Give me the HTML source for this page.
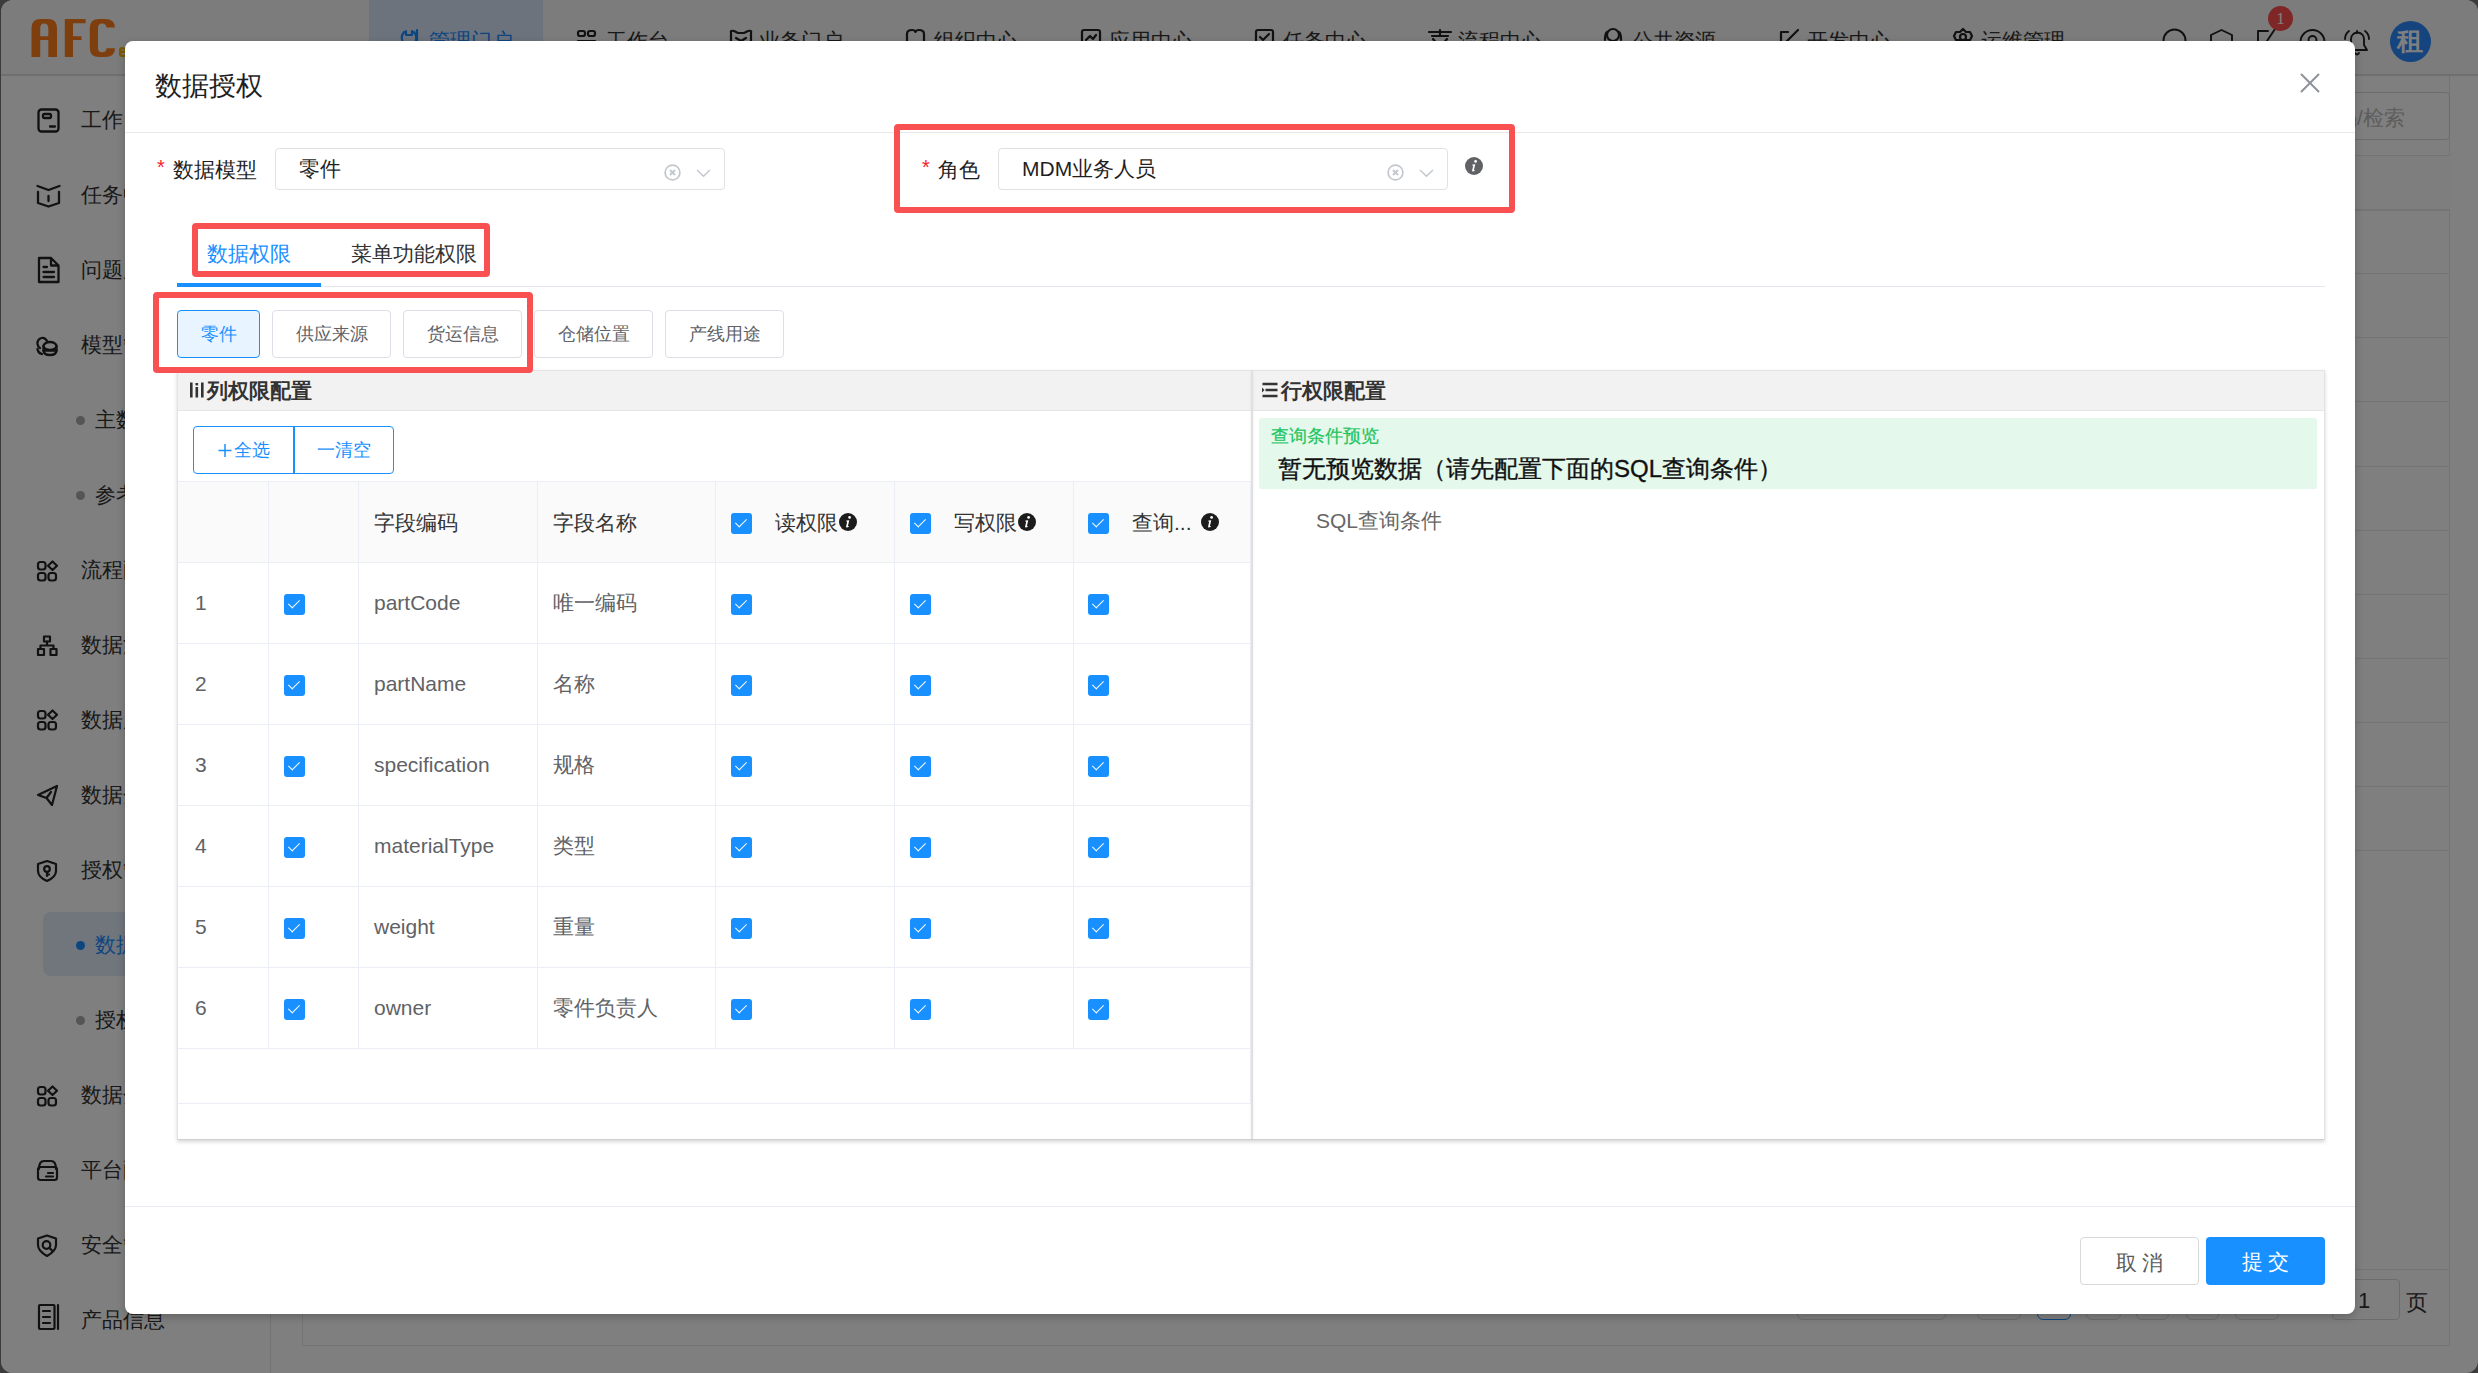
<!DOCTYPE html>
<html><head><meta charset="utf-8">
<style>
*{box-sizing:border-box;margin:0;padding:0}
html,body{width:2478px;height:1373px;overflow:hidden}
body{background:#767676;font-family:"Liberation Sans",sans-serif;position:relative}
.page{position:absolute;left:1px;top:0;width:2477px;height:1373px;border-radius:12px;background:#fff;overflow:hidden}
.hdr{position:absolute;left:0;top:0;width:100%;height:76px;background:#f6f8f6;border-bottom:2px solid #dedede}
.nav{position:absolute;top:28px;font-size:21px;line-height:26px;color:#333;white-space:nowrap}
.nav svg{position:absolute;top:2px}
.side{position:absolute;left:0;top:76px;width:270px;height:1300px;background:#fff;border-right:1px solid #e6e6e6}
.si{position:absolute;left:80px;font-size:21px;color:#333;white-space:nowrap;line-height:26px}

.sub{position:absolute;left:94px;font-size:21px;color:#333;white-space:nowrap;line-height:26px}
.sub:before{content:"";position:absolute;left:-19px;top:8.5px;width:9px;height:9px;border-radius:50%;background:#aaa}
.mask{position:absolute;left:0;top:0;width:2478px;height:1373px;background:rgba(0,0,0,.5)}
.modal{position:absolute;left:125px;top:41px;width:2230px;height:1273px;background:#fff;border-radius:8px;overflow:hidden;box-shadow:0 3px 10px rgba(0,0,0,.22)}
.t{position:absolute;white-space:nowrap}
.red{position:absolute;border:6px solid #f95052;border-radius:4px}
.inp{position:absolute;top:148px;height:42px;border:1px solid #dfe1e5;border-radius:4px;background:#fff}
.inp span{position:absolute;top:5px;font-size:21px;line-height:30px;color:#1f1f1f;white-space:nowrap}
.clr{position:absolute;top:164px;width:16px;height:16px;border:1.3px solid #bbb;border-radius:50%}
.clr:before,.clr:after{content:"";position:absolute;left:3.5px;top:6.5px;width:7px;height:1.3px;background:#bbb;transform:rotate(45deg)}
.clr:after{transform:rotate(-45deg)}
.chev{position:absolute;top:168.5px}
.info{position:absolute;border-radius:50%;color:#fff;text-align:center;font-style:italic;font-weight:bold;font-family:"Liberation Serif",serif}
.sbtn{position:absolute;top:310px;height:48px;border:1px solid #dcdfe6;border-radius:4px;font-size:18px;line-height:46px;text-align:center;color:#606266;background:#fff}
.sbtn.act{background:#e8f4ff;border-color:#1890ff;color:#1890ff}
.panel{position:absolute;border:1px solid #e3e3e3;border-bottom-color:#d0d0d0;box-shadow:0 2px 4px rgba(0,0,0,.16);background:#fff}
.fbtn{position:absolute;top:1237px;width:119px;height:48px;border-radius:4px;font-size:21px;line-height:50px;text-align:center}
.cb{position:absolute;width:21px;height:21px;border-radius:3px;background:#1890ff}
.cb:after{content:"";position:absolute;left:7px;top:3px;width:5px;height:10px;border:solid #fff;border-width:0 1.6px 1.6px 0;transform:rotate(45deg)}
.td{position:absolute;font-size:21px;line-height:30px;color:#606266;white-space:nowrap}
.sub.act:before{background:#1a8cff}
</style></head>
<body>
<div class="page">
  <div class="hdr">
    <svg style="position:absolute;left:0;top:0" width="140" height="70" viewBox="0 0 140 70">
      <path fill="#ff7c1c" fill-rule="evenodd" d="M30.5 57 V28 Q30.5 19 39.5 19 H47 Q56 19 56 28 V57 H47.3 V40 H39.2 V57 Z M39.2 36.2 V28.5 Q39.2 23.5 43.2 23.5 Q47.3 23.5 47.3 28.5 V36.2 Z"/>
      <path fill="#ff7c1c" d="M63.8 57 V19 H84.6 V23.3 H72 V36.2 H80.5 V40 H72 V57 Z"/>
      <path fill="#ff7c1c" d="M114 27.5 V28 Q114 19 104 19 H98 Q88.8 19 88.8 28 V48 Q88.8 57 98 57 H104 Q114 57 114 48 V48.3 H105.5 V48 Q105.5 52.3 101 52.3 Q97 52.3 97 48 V28 Q97 23.4 101 23.4 Q105.5 23.4 105.5 28 V27.5 Z"/>
      <path fill="#ffb000" fill-rule="evenodd" d="M118 50 Q118 47 121 47 Q125 47 125 50 V53 H120.5 V54.5 H125 V57 H121 Q118 57 118 54 Z M120.5 50.8 H122.6 V49.5 H120.5 Z"/>
    </svg>
    <div style="position:absolute;left:368px;top:0;width:174px;height:75px;background:#d8e6fb"></div>
    <svg style="position:absolute;left:395px;top:20px" width="1600" height="40" viewBox="395 20 1600 40" fill="none" stroke="#222" stroke-width="2.2" stroke-linecap="round" stroke-linejoin="round">
      <path stroke="#1a8cff" d="M405 31 V35 H411 V31 M403 32 Q398 38 404 46 M413 32 Q418 38 412 46 M416 30 V50 M412 50 H420"/>
      <rect x="577" y="31" width="7" height="5" rx="2"/><rect x="587" y="31" width="7" height="5" rx="2"/><path d="M577 41 H594"/>
      <path d="M730 33 Q729 30 733 31 L737 33 H743 L747 31 Q751 30 750 33 V42 M730 33 V42 M735 38 L740 41 L745 38"/>
      <path d="M906 34 Q906 30 911 30 Q914 30 914.5 32 Q915 30 918 30 Q923 30 923 34 V44"/><path d="M906 34 V44"/>
      <rect x="1081" y="30" width="18" height="16" rx="2"/><path d="M1085 40 L1089 36 L1092 39 L1095 35"/>
      <rect x="1255" y="30" width="17" height="18" rx="2"/><path d="M1259 37 L1262 40 L1268 34"/>
      <path d="M1428 32 H1450 M1439 30 V36 M1431 36 L1447 36 M1432 39 L1437 45 M1446 39 L1441 45"/>
      <circle cx="1612" cy="35" r="6"/><path d="M1604 40 Q1604 33 1606 32 M1620 40 Q1620 33 1618 32"/>
      <path d="M1780 32 H1787 M1780 32 V48 M1783 44 L1797 30"/>
      <path d="M1962 29 L1965 32 H1969 L1971 36 L1969 40 H1955 L1953 36 L1955 32 H1959 Z"/><circle cx="1962" cy="37" r="3"/>
    </svg>
    <div class="nav" style="left:428px;color:#1a8cff">管理门户</div>
    <div class="nav" style="left:605px">工作台</div>
    <div class="nav" style="left:758px">业务门户</div>
    <div class="nav" style="left:933px">组织中心</div>
    <div class="nav" style="left:1108px">应用中心</div>
    <div class="nav" style="left:1282px">任务中心</div>
    <div class="nav" style="left:1457px">流程中心</div>
    <div class="nav" style="left:1631px">公共资源</div>
    <div class="nav" style="left:1806px">开发中心</div>
    <div class="nav" style="left:1980px">运维管理</div>
    <svg style="position:absolute;left:2148.5px;top:20px" width="230" height="45" viewBox="2150 20 230 45" fill="none" stroke="#222" stroke-width="1.9" stroke-linecap="round" stroke-linejoin="round">
      <circle cx="2174.5" cy="40.5" r="11"/>
      <path d="M2221.5 30 L2232 35 V47 L2221.5 52 L2211 47 V35 Z"/>
      <path d="M2268 31 H2258 V52 H2276 V42 M2265 44 L2277 26"/>
      <circle cx="2312.5" cy="42" r="12"/><circle cx="2312.5" cy="40" r="4"/>
      <path d="M2347 50 H2367 L2364 45 V39 A6.5 6.5 0 0 0 2351 39 V45 Z M2357 31 V33 M2355 53 Q2357 56 2359 53 M2345 39 Q2345 34 2349 31 M2369 39 Q2369 34 2365 31"/>
    </svg>
    <div style="position:absolute;left:2267px;top:5.5px;width:25px;height:25px;border-radius:50%;background:#ff4d4f;color:#fff;font-size:17px;line-height:25px;text-align:center;font-family:'Liberation Serif',serif">1</div>
    <div style="position:absolute;left:2388.5px;top:20.5px;width:41px;height:41px;border-radius:50%;background:#2a89ff;color:#fff;font-size:26px;font-weight:bold;line-height:41px;text-align:center">租</div>
  </div>
  <div class="side">
<svg style="position:absolute;left:0;top:0" width="80" height="1300" viewBox="0 76 80 1300" fill="none" stroke="#222" stroke-width="2.3" stroke-linecap="round" stroke-linejoin="round">
  <rect x="37.5" y="109.5" width="20" height="22" rx="3"/><rect x="42" y="114" width="8" height="4" rx="1.5"/><path d="M49 126.5 H54"/>
  <path d="M36.5 186 L47.5 190 L58.5 186 M37 192 V203 L47.5 206.5 L58 203 V192 M47.5 196 V201"/>
  <path d="M38 258 H50 L57.5 265.5 V282 H38 Z M50 258 V265.5 H57.5 M42.5 267 H46 M42.5 272 H53 M42.5 277 H53"/>
  <path d="M46 341 Q44 337 40.5 338 Q36 339.5 36.5 344 Q37 347 39 348 M36.5 349 Q37 353 41 354"/><ellipse cx="49" cy="346" rx="6.5" ry="4"/><path d="M42.5 346 V351 Q43 355 49 355 Q55 355 55.5 351 V346"/><path d="M42.5 350.5 H55.5"/>
</svg><svg style="position:absolute;left:0;top:0" width="80" height="1300" viewBox="0 76 80 1300" fill="none" stroke="#222" stroke-width="2.2" stroke-linecap="round" stroke-linejoin="round"><rect x="37" y="562" width="7.5" height="7.5" rx="2.5"/><path d="M51.5 561.5 L56 565.75 L51.5 570 L47 565.75 Z"/><rect x="37" y="573" width="7.5" height="7.5" rx="2.5"/><rect x="47.5" y="573" width="7.5" height="7.5" rx="2.5"/><rect x="37" y="711" width="7.5" height="7.5" rx="2.5"/><path d="M51.5 710.5 L56 714.75 L51.5 719 L47 714.75 Z"/><rect x="37" y="722" width="7.5" height="7.5" rx="2.5"/><rect x="47.5" y="722" width="7.5" height="7.5" rx="2.5"/><rect x="37" y="1087" width="7.5" height="7.5" rx="2.5"/><path d="M51.5 1086.5 L56 1090.75 L51.5 1095 L47 1090.75 Z"/><rect x="37" y="1098" width="7.5" height="7.5" rx="2.5"/><rect x="47.5" y="1098" width="7.5" height="7.5" rx="2.5"/><rect x="43" y="636.5" width="6" height="5"/><path d="M46 641.5 V645.5 M39.5 649 V645.5 H52.5 V649"/><rect x="37" y="649" width="6" height="6"/><rect x="49.5" y="649" width="6" height="6"/><path d="M37 795 L56 786 L51 805 L45.5 798 Z M45.5 798 L50 792"/><path d="M46 861 L55 864 V871 Q55 877 46 881 Q37 877 37 871 V864 Z"/><circle cx="46" cy="869" r="2.8"/><path d="M46 872 V876 M46 874.5 H48"/><path d="M38 1169 Q38 1161 43 1161 H50 Q55 1161 55 1169"/><rect x="37" y="1167" width="19" height="13" rx="2.5"/><path d="M47 1173 H52 M45 1176.5 H52"/><path d="M46 1235.5 L55 1238.5 V1245 Q55 1251 46 1256 Q37 1251 37 1245 V1238.5 Z"/><circle cx="45.5" cy="1245" r="3.8"/><path d="M48.5 1248 L51.5 1251"/><rect x="38" y="1305" width="15.5" height="24" rx="1"/><path d="M42 1311 H49 M42 1317 H49 M42 1323 H49 M57 1305 V1329"/></svg>
    <div class="si" style="top:31px">工作台</div>
    <div class="si" style="top:106px">任务中心</div>
    <div class="si" style="top:181px">问题反馈</div>
    <div class="si" style="top:256px">模型管理</div>
    <div class="sub" style="top:331px">主数据</div>
    <div class="sub" style="top:406px">参考数据</div>
    <div class="si" style="top:481px">流程配置</div>
    <div class="si" style="top:556px">数据治理</div>
    <div class="si" style="top:631px">数据质量</div>
    <div class="si" style="top:706px">数据分发</div>
    <div class="si" style="top:781px">授权管理</div>
    <div style="position:absolute;left:42px;top:836px;width:220px;height:64px;border-radius:8px;background:#e3edfb"></div>
    <div class="sub act" style="top:856px;color:#1a8cff">数据授权</div>
    <div class="sub" style="top:931px">授权记录</div>
    <div class="si" style="top:1006px">数据分析</div>
    <div class="si" style="top:1081px">平台配置</div>
    <div class="si" style="top:1156px">安全管理</div>
    <div class="si" style="top:1231px">产品信息</div>
  </div>
  <!-- content -->
  <div style="position:absolute;left:301px;top:76px;width:2148px;height:1270px;border:1px solid #e8e8e8;border-top:none;background:#fff"></div>
  <div style="position:absolute;left:1900px;top:92px;width:549px;height:48px;border:1px solid #d9d9d9;border-radius:4px;background:#fff"></div>
  <div class="t" style="left:2314px;top:104px;font-size:21px;color:#bbb">编码/检索</div>
  <div style="position:absolute;left:302px;top:155px;width:2147px;height:55px;background:#fcfcfc;border-top:1px solid #e8e8e8;border-bottom:1px solid #e8e8e8"></div>
  <div id="bgrows"><div style="position:absolute;left:302px;top:210px;width:2147px;height:1px;background:#e8e8e8"></div><div style="position:absolute;left:302px;top:273px;width:2147px;height:1px;background:#e8e8e8"></div><div style="position:absolute;left:302px;top:337px;width:2147px;height:1px;background:#e8e8e8"></div><div style="position:absolute;left:302px;top:401px;width:2147px;height:1px;background:#e8e8e8"></div><div style="position:absolute;left:302px;top:466px;width:2147px;height:1px;background:#e8e8e8"></div><div style="position:absolute;left:302px;top:530px;width:2147px;height:1px;background:#e8e8e8"></div><div style="position:absolute;left:302px;top:594px;width:2147px;height:1px;background:#e8e8e8"></div><div style="position:absolute;left:302px;top:658px;width:2147px;height:1px;background:#e8e8e8"></div><div style="position:absolute;left:302px;top:722px;width:2147px;height:1px;background:#e8e8e8"></div><div style="position:absolute;left:302px;top:786px;width:2147px;height:1px;background:#e8e8e8"></div><div style="position:absolute;left:302px;top:850px;width:2147px;height:1px;background:#e8e8e8"></div></div>
  <div style="position:absolute;left:1796px;top:1279px;width:149px;height:41px;border:1px solid #d9d9d9;border-radius:6px"></div><div style="position:absolute;left:1976px;top:1279px;width:44px;height:41px;border:1px solid #d9d9d9;border-radius:6px"></div><div style="position:absolute;left:2036px;top:1279px;width:34px;height:41px;border:1px solid #1890ff;border-radius:6px"></div><div style="position:absolute;left:2085px;top:1279px;width:35px;height:41px;border:1px solid #d9d9d9;border-radius:6px"></div><div style="position:absolute;left:2135px;top:1279px;width:33px;height:41px;border:1px solid #d9d9d9;border-radius:6px"></div><div style="position:absolute;left:2185px;top:1279px;width:33px;height:41px;border:1px solid #d9d9d9;border-radius:6px"></div><div style="position:absolute;left:2234px;top:1279px;width:44px;height:41px;border:1px solid #d9d9d9;border-radius:6px"></div><div style="position:absolute;left:302px;top:1269px;width:2147px;height:1px;background:#e8e8e8"></div><div style="position:absolute;left:2331px;top:1279px;width:68px;height:41px;border:1px solid #d9d9d9;border-radius:4px"></div>
  <div class="t" style="left:2357px;top:1288px;font-size:22px;color:#333">1</div>
  <div class="t" style="left:2405px;top:1288px;font-size:22px;color:#333">页</div>
</div>
<div class="mask"></div>
<div class="modal"></div>
<div id="mc" style="position:absolute;left:0;top:0;width:2478px;height:1373px">
  <div class="t" style="left:155px;top:66px;font-size:27px;line-height:40px;color:#1f1f1f">数据授权</div>
  <div style="position:absolute;left:125px;top:132px;width:2230px;height:1px;background:#e8e8e8"></div>
  <svg style="position:absolute;left:2300px;top:73px" width="20" height="20" viewBox="0 0 20 20"><path d="M1.5 1.5 L18.5 18.5 M18.5 1.5 L1.5 18.5" stroke="#8e9299" stroke-width="2" stroke-linecap="round"/></svg>

  <div class="t" style="left:157px;top:156px;font-size:20px;color:#f5222d">*</div>
  <div class="t" style="left:173px;top:155px;font-size:21px;line-height:30px;color:#1f1f1f">数据模型</div>
  <div class="inp" style="left:275px;width:450px"><span style="left:23px">零件</span></div>
  <svg style="position:absolute;left:663.5px;top:163.5px" width="17" height="17" viewBox="0 0 17 17"><circle cx="8.5" cy="8.5" r="7.4" fill="none" stroke="#c3c7ce" stroke-width="1.7"/><path d="M6 6 L11 11 M11 6 L6 11" stroke="#c3c7ce" stroke-width="1.9"/></svg>
  <svg class="chev" style="left:695.5px" width="15" height="9" viewBox="0 0 15 9"><path d="M1 1 L7.5 7.2 L14 1" fill="none" stroke="#c3c7ce" stroke-width="1.5"/></svg>

  <div class="t" style="left:922px;top:156px;font-size:20px;color:#f5222d">*</div>
  <div class="t" style="left:938px;top:155px;font-size:21px;line-height:30px;color:#1f1f1f">角色</div>
  <div class="inp" style="left:998px;width:450px"><span style="left:23px">MDM业务人员</span></div>
  <svg style="position:absolute;left:1387px;top:163.5px" width="17" height="17" viewBox="0 0 17 17"><circle cx="8.5" cy="8.5" r="7.4" fill="none" stroke="#c3c7ce" stroke-width="1.7"/><path d="M6 6 L11 11 M11 6 L6 11" stroke="#c3c7ce" stroke-width="1.9"/></svg>
  <svg class="chev" style="left:1419px" width="15" height="9" viewBox="0 0 15 9"><path d="M1 1 L7.5 7.2 L14 1" fill="none" stroke="#c3c7ce" stroke-width="1.5"/></svg>
  <svg style="position:absolute;left:1465px;top:157px" width="18" height="18" viewBox="0 0 18 18"><circle cx="9" cy="9" r="9" fill="#606266"/><circle cx="10.6" cy="4.4" r="1.35" fill="#fff"/><path d="M7.4 7.6 L10.3 7.3 L8.9 13 Q8.8 13.6 9.6 13.2 L10.1 13 L9.9 13.8 Q8.9 14.6 7.8 14.6 Q6.9 14.5 7.1 13.5 L8.2 8.8 L7.3 8.6 Z" fill="#fff"/></svg>

  <div class="t" style="left:207px;top:239px;font-size:21px;line-height:30px;color:#1890ff">数据权限</div>
  <div class="t" style="left:351px;top:239px;font-size:21px;line-height:30px;color:#333">菜单功能权限</div>
  <div style="position:absolute;left:177px;top:286px;width:2148px;height:1px;background:#e4e7ed"></div>
  <div style="position:absolute;left:177px;top:283px;width:144px;height:4px;background:#1890ff"></div>

  <div class="sbtn act" style="left:177px;width:83px">零件</div>
  <div class="sbtn" style="left:272px;width:119px">供应来源</div>
  <div class="sbtn" style="left:403px;width:119px">货运信息</div>
  <div class="sbtn" style="left:534px;width:119px">仓储位置</div>
  <div class="sbtn" style="left:665px;width:119px">产线用途</div>

  <div class="panel" style="left:177px;top:370px;width:2148px;height:770px"></div>
  <div style="position:absolute;left:178px;top:371px;width:2146px;height:40px;background:#f2f2f2;border-bottom:1px solid #e6e6e6"></div>
  <div style="position:absolute;left:1251px;top:371px;width:1.5px;height:768px;background:#e0e0e0;box-shadow:0 0 3px rgba(0,0,0,.08)"></div>
  <svg style="position:absolute;left:189px;top:381px" width="16" height="18" viewBox="0 0 16 18"><rect x="1" y="1.5" width="2.6" height="15" fill="#333"/><rect x="6.5" y="6" width="2.6" height="10.5" fill="#333"/><rect x="6.5" y="2" width="2.6" height="2.4" fill="#333"/><rect x="12" y="1.5" width="2.6" height="15" fill="#333"/></svg>
  <div class="t" style="left:207px;top:376px;font-size:21px;line-height:30px;font-weight:bold;color:#333">列权限配置</div>
  <svg style="position:absolute;left:1261px;top:382px" width="18" height="16" viewBox="0 0 18 16"><path d="M1.5 2 H16.5 M4.5 8 H16.5 M1.5 14 H16.5" stroke="#333" stroke-width="2.6"/><path d="M1 5.5 L3.5 8 L1 10.5 Z" fill="#333"/></svg>
  <div class="t" style="left:1281px;top:376px;font-size:21px;line-height:30px;font-weight:bold;color:#333">行权限配置</div>

  <div style="position:absolute;left:193px;top:426px;width:201px;height:48px;border:1.5px solid #1890ff;border-radius:4px"></div>
  <div style="position:absolute;left:293px;top:426px;width:1.5px;height:48px;background:#1890ff"></div>
  <svg style="position:absolute;left:218px;top:443px" width="14" height="15" viewBox="0 0 14 15"><path d="M0.5 7.5 H13.5 M7 1 V14" stroke="#1890ff" stroke-width="1.5"/></svg>
  <div class="t" style="left:234px;top:436px;font-size:18px;line-height:28px;color:#1890ff">全选</div>
  <div class="t" style="left:294px;top:436px;width:100px;text-align:center;font-size:18px;line-height:28px;color:#1890ff">一清空</div>
  <div id="tbl">
<div style="position:absolute;left:178px;top:481px;width:1072px;height:81px;background:#fafafa"></div>
<div style="position:absolute;left:178px;top:481px;width:1072px;height:1px;background:#ebeef5"></div>
<div style="position:absolute;left:178px;top:562px;width:1072px;height:1px;background:#ebeef5"></div>
<div style="position:absolute;left:178px;top:643px;width:1072px;height:1px;background:#ebeef5"></div>
<div style="position:absolute;left:178px;top:724px;width:1072px;height:1px;background:#ebeef5"></div>
<div style="position:absolute;left:178px;top:805px;width:1072px;height:1px;background:#ebeef5"></div>
<div style="position:absolute;left:178px;top:886px;width:1072px;height:1px;background:#ebeef5"></div>
<div style="position:absolute;left:178px;top:967px;width:1072px;height:1px;background:#ebeef5"></div>
<div style="position:absolute;left:178px;top:1048px;width:1072px;height:1px;background:#ebeef5"></div>
<div style="position:absolute;left:178px;top:1103px;width:1072px;height:1px;background:#ebeef5"></div>
<div style="position:absolute;left:268px;top:481px;width:1px;height:567px;background:#ebeef5"></div>
<div style="position:absolute;left:358px;top:481px;width:1px;height:567px;background:#ebeef5"></div>
<div style="position:absolute;left:537px;top:481px;width:1px;height:567px;background:#ebeef5"></div>
<div style="position:absolute;left:715px;top:481px;width:1px;height:567px;background:#ebeef5"></div>
<div style="position:absolute;left:894px;top:481px;width:1px;height:567px;background:#ebeef5"></div>
<div style="position:absolute;left:1073px;top:481px;width:1px;height:567px;background:#ebeef5"></div>
<div style="position:absolute;left:1250px;top:481px;width:1px;height:623px;background:#ebeef5"></div>
<div class="td" style="left:374px;top:508px;color:#333">字段编码</div>
<div class="td" style="left:553px;top:508px;color:#333">字段名称</div>
<div class="cb" style="left:731px;top:513px"></div>
<div class="td" style="left:775px;top:508px;color:#333">读权限</div>
<svg style="position:absolute;left:838.5px;top:512.5px" width="18" height="18" viewBox="0 0 18 18"><circle cx="9" cy="9" r="9" fill="#1c1c1c"/><circle cx="10.6" cy="4.4" r="1.35" fill="#fff"/><path d="M7.4 7.6 L10.3 7.3 L8.9 13 Q8.8 13.6 9.6 13.2 L10.1 13 L9.9 13.8 Q8.9 14.6 7.8 14.6 Q6.9 14.5 7.1 13.5 L8.2 8.8 L7.3 8.6 Z" fill="#fff"/></svg>
<div class="cb" style="left:910px;top:513px"></div>
<div class="td" style="left:954px;top:508px;color:#333">写权限</div>
<svg style="position:absolute;left:1017.5px;top:512.5px" width="18" height="18" viewBox="0 0 18 18"><circle cx="9" cy="9" r="9" fill="#1c1c1c"/><circle cx="10.6" cy="4.4" r="1.35" fill="#fff"/><path d="M7.4 7.6 L10.3 7.3 L8.9 13 Q8.8 13.6 9.6 13.2 L10.1 13 L9.9 13.8 Q8.9 14.6 7.8 14.6 Q6.9 14.5 7.1 13.5 L8.2 8.8 L7.3 8.6 Z" fill="#fff"/></svg>
<div class="cb" style="left:1088px;top:513px"></div>
<div class="td" style="left:1132px;top:508px;color:#333">查询...</div>
<svg style="position:absolute;left:1200.5px;top:512.5px" width="18" height="18" viewBox="0 0 18 18"><circle cx="9" cy="9" r="9" fill="#1c1c1c"/><circle cx="10.6" cy="4.4" r="1.35" fill="#fff"/><path d="M7.4 7.6 L10.3 7.3 L8.9 13 Q8.8 13.6 9.6 13.2 L10.1 13 L9.9 13.8 Q8.9 14.6 7.8 14.6 Q6.9 14.5 7.1 13.5 L8.2 8.8 L7.3 8.6 Z" fill="#fff"/></svg>
<div class="td" style="left:195px;top:588px">1</div>
<div class="cb" style="left:284px;top:594px"></div>
<div class="cb" style="left:731px;top:594px"></div>
<div class="cb" style="left:910px;top:594px"></div>
<div class="cb" style="left:1088px;top:594px"></div>
<div class="td" style="left:374px;top:588px">partCode</div>
<div class="td" style="left:553px;top:588px">唯一编码</div>
<div class="td" style="left:195px;top:669px">2</div>
<div class="cb" style="left:284px;top:675px"></div>
<div class="cb" style="left:731px;top:675px"></div>
<div class="cb" style="left:910px;top:675px"></div>
<div class="cb" style="left:1088px;top:675px"></div>
<div class="td" style="left:374px;top:669px">partName</div>
<div class="td" style="left:553px;top:669px">名称</div>
<div class="td" style="left:195px;top:750px">3</div>
<div class="cb" style="left:284px;top:756px"></div>
<div class="cb" style="left:731px;top:756px"></div>
<div class="cb" style="left:910px;top:756px"></div>
<div class="cb" style="left:1088px;top:756px"></div>
<div class="td" style="left:374px;top:750px">specification</div>
<div class="td" style="left:553px;top:750px">规格</div>
<div class="td" style="left:195px;top:831px">4</div>
<div class="cb" style="left:284px;top:837px"></div>
<div class="cb" style="left:731px;top:837px"></div>
<div class="cb" style="left:910px;top:837px"></div>
<div class="cb" style="left:1088px;top:837px"></div>
<div class="td" style="left:374px;top:831px">materialType</div>
<div class="td" style="left:553px;top:831px">类型</div>
<div class="td" style="left:195px;top:912px">5</div>
<div class="cb" style="left:284px;top:918px"></div>
<div class="cb" style="left:731px;top:918px"></div>
<div class="cb" style="left:910px;top:918px"></div>
<div class="cb" style="left:1088px;top:918px"></div>
<div class="td" style="left:374px;top:912px">weight</div>
<div class="td" style="left:553px;top:912px">重量</div>
<div class="td" style="left:195px;top:993px">6</div>
<div class="cb" style="left:284px;top:999px"></div>
<div class="cb" style="left:731px;top:999px"></div>
<div class="cb" style="left:910px;top:999px"></div>
<div class="cb" style="left:1088px;top:999px"></div>
<div class="td" style="left:374px;top:993px">owner</div>
<div class="td" style="left:553px;top:993px">零件负责人</div>
</div>

  <div style="position:absolute;left:1259px;top:418px;width:1058px;height:71px;background:#e4f8ec;border-radius:3px"></div>
  <div class="t" style="left:1271px;top:423px;font-size:18px;line-height:26px;color:#22c55e;-webkit-text-stroke:0.2px #22c55e">查询条件预览</div>
  <div class="t" style="left:1278px;top:453px;font-size:24px;line-height:32px;color:#111;-webkit-text-stroke:0.35px #111">暂无预览数据（请先配置下面的SQL查询条件）</div>
  <div class="t" style="left:1316px;top:506px;font-size:21px;line-height:30px;color:#666">SQL查询条件</div>

  <div style="position:absolute;left:125px;top:1206px;width:2230px;height:1px;background:#e8ebf0"></div>
  <div class="fbtn" style="left:2080px;border:1px solid #d9d9d9;color:#595959">取 消</div>
  <div class="fbtn" style="left:2206px;background:#1890ff;color:#fff">提 交</div>
</div>
<div class="red" style="left:894px;top:124px;width:621px;height:89px"></div>
<div class="red" style="left:192px;top:223px;width:298px;height:54px"></div>
<div class="red" style="left:153px;top:292px;width:380px;height:81px"></div>
</body></html>
